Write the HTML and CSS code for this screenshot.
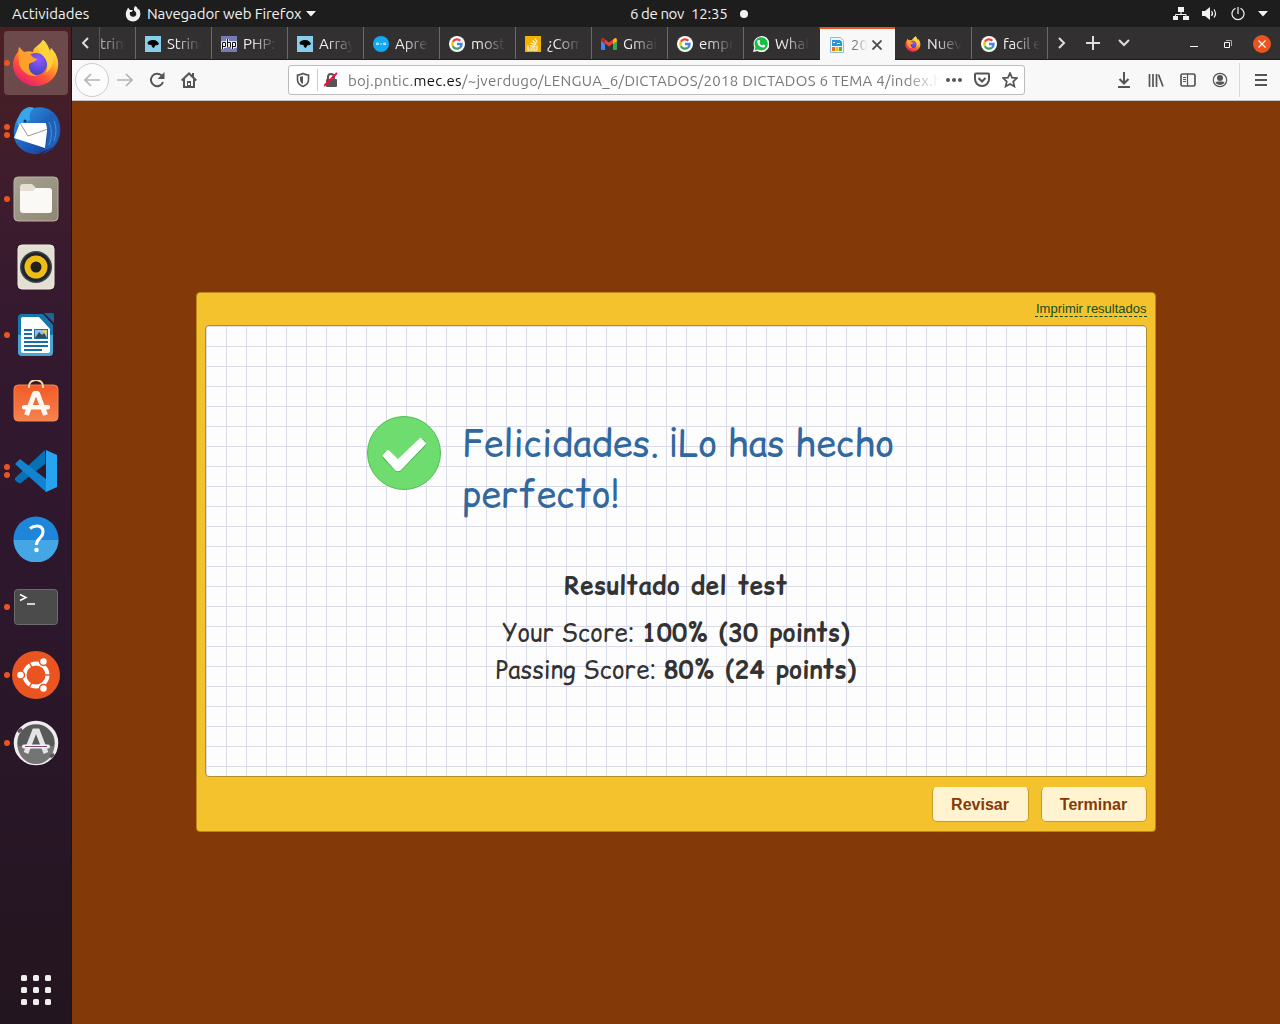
FILE: index.html
```html
<!DOCTYPE html>
<html lang="es">
<head>
<meta charset="utf-8">
<title>2018 DICTADOS 6 TEMA 4</title>
<link rel="stylesheet" href="styles.css">
</head>
<body>
<svg class="defs" width="0" height="0">
  <defs>
    <linearGradient id="fxFlame" x1=".8" y1="0" x2=".2" y2="1"><stop offset="0" stop-color="#fff44f"/><stop offset=".35" stop-color="#ffb22c"/><stop offset=".65" stop-color="#ff5634"/><stop offset="1" stop-color="#e3127d"/></linearGradient>
    <radialGradient id="fxGlobe" cx=".6" cy=".3" r=".8"><stop offset="0" stop-color="#9059ff"/><stop offset="1" stop-color="#3b3fb5"/></radialGradient>
    <linearGradient id="tb" x1="0" y1="0" x2="1" y2="1"><stop offset="0" stop-color="#2f9be8"/><stop offset=".6" stop-color="#1c58b5"/><stop offset="1" stop-color="#1e2f80"/></linearGradient>
    <linearGradient id="filesBg" x1="0" y1="0" x2="1" y2="1"><stop offset="0" stop-color="#a8a392"/><stop offset="1" stop-color="#8d8773"/></linearGradient>
    <linearGradient id="bag" x1="0" y1="0" x2="0" y2="1"><stop offset="0" stop-color="#f25a26"/><stop offset="1" stop-color="#f5834f"/></linearGradient>
  </defs>
  <symbol id="firefox" viewBox="0 0 48 48">
    <path fill="url(#fxFlame)" d="M31 1c4 3 6 8 7 12l1-4c5 5 8 11 7 19-1 11-11 19-22 19S2 39 1 27c0-6 2-11 5-14l1-5 5 5c3-1 6-1 9 0 0-5 6-6 10-12z"/>
    <circle cx="24" cy="25" r="11" fill="url(#fxGlobe)"/>
    <path fill="#ffa02c" d="M7 8c2 4 6 6 10 6 2 1 3 5 8 6-1 3-5 3-8 5-1 7 3 10 8 12-9 1-18-6-18-14-1-6 0-10 0-15z"/>
    <path fill="#ffd43c" opacity=".85" d="M31 1c4 3 6 8 7 12l1-4c4 7 4 18-5 25 3-8 1-14-5-19-4-4-3-8 2-14z"/>
  </symbol>
  <symbol id="google" viewBox="0 0 16 16">
    <circle cx="8" cy="8" r="8" fill="#fff"/>
    <g fill="none" stroke-width="2.3">
      <path stroke="#ea4335" d="M3.9 5.8A4.6 4.6 0 0 1 11.3 4.8"/>
      <path stroke="#fbbc05" d="M3.9 5.8a4.6 4.6 0 0 0 0 4.4"/>
      <path stroke="#34a853" d="M3.9 10.2a4.6 4.6 0 0 0 7 1.4"/>
      <path stroke="#4285f4" d="M8 8h4.6a4.6 4.6 0 0 1-1.7 3.6"/>
    </g>
  </symbol>
  <symbol id="bird" viewBox="0 0 16 16">
    <path fill="#87ceeb" d="M0 0h16v16H0z"/>
    <path d="M2.500 6.500q1-2 3.500-2.300 4-.7 6 1l2 2.300-1 1.500-3 .5-1 2.500-2-1-.5-2-3.500-.5z"/>
  </symbol>
</svg>

<header class="topbar">
  <span class="activities">Actividades</span>
  <span class="appmenu">
    <svg width="16" height="16" viewBox="0 0 16 16"><path fill="#f2f2f2" d="M10 0c2 1 2.500 2 3 3.500L14 3c3 5 1 12-6 12.500C1 15.500-1 8 2.500 3L3 1.500 5 4h3L6.500 6H5c-1 3 1 5 3.500 4.800C12 10.500 12 6.500 9.500 5 8.500 3.500 9 1.500 10 0z"/></svg>
    <span class="appname">Navegador web Firefox</span>
    <svg width="10" height="6"><path fill="#f2f2f2" d="M0 0h10L5 5.500z"/></svg>
  </span>
  <span class="clock"><span class="date">6 de nov</span><span class="time">12:35</span><i class="dot"></i></span>
  <span class="tray">
    <svg width="16" height="14" viewBox="0 0 16 14"><path fill="#f2f2f2" d="M5 0h6v5H5zM0 9h5v4H0zM10 9h6v4h-6z"/><path fill="none" stroke="#f2f2f2" d="M8 4v3.500M2.500 9V7.500h10.500V9"/></svg>
    <svg width="16" height="14" viewBox="0 0 16 14"><path fill="#f2f2f2" d="M0 4h3l5-4v13L3 9H0z"/><path fill="none" stroke="#f2f2f2" stroke-width="1.200" d="M9.500 4q2 2.500 0 5M12 2.500q3 4 0 8"/></svg>
    <svg width="14" height="14" viewBox="0 0 14 14"><path fill="none" stroke="#f2f2f2" stroke-width="1.200" d="M4.500 1.200a6 6 0 1 0 5 0M7 0v7"/></svg>
    <svg width="10" height="6"><path fill="#f2f2f2" d="M0 0h10L5 5.500z"/></svg>
  </span>
</header>

<div class="desktop">
  <nav class="dock">
    <a class="app active one"><svg width="48" height="48"><use href="#firefox"/></svg></a>
    <a class="app two"><svg width="50" height="50" viewBox="0 0 50 50">
      <path fill="url(#tb)" d="M8 10c3-8 10-10 15-8 13-3 24 5 26 17 2 13-4 26-18 29l5-4-9 4c-9 1-18-4-22-11C1 28 3 17 8 10z"/>
      <path fill="#3aa6ea" d="M9 9c3-7 10-9 14-7-4 3-5 6-4 12l-11 6c-3-2-2-7 1-11z"/>
      <circle cx="14" cy="15" r="1.500" fill="#1b2c55"/>
      <path fill="#fff" d="M9 17l28 0-3 25L3 32z"/><path fill="none" stroke="#999" d="M9 17l8 13 20-7"/>
      <path fill="#2260b8" d="M34 15l8-9c9 10 9 26 0 35l-9 3c4-8 5-19 1-29z"/>
      <path fill="none" stroke="#3c98df" d="M38 16q5 11 0 23M43 15q4 9 0 20"/>
    </svg></a>
    <a class="app one"><svg width="46" height="46" viewBox="0 0 46 46"><rect x="1" y="1" width="44" height="44" rx="4" fill="url(#filesBg)" stroke="#b8b3a3"/><path fill="#e4e0d3" d="M7 11q0-3 3-3h9l4 4v7H7z"/><path fill="#faf9f6" d="M7 15h13l3-3h13q3 0 3 3v19q0 3-3 3H10q-3 0-3-3z"/></svg></a>
    <a class="app"><svg width="46" height="46" viewBox="0 0 46 46"><rect x="5" y="1" width="36" height="44" rx="4" fill="#e3dfd3" stroke="#f0ede4"/><circle cx="23" cy="23" r="16" fill="#41454b"/><circle cx="23" cy="23" r="14.500" fill="#20242b"/><circle cx="23" cy="23" r="11.500" fill="#eebd16"/><circle cx="23" cy="23" r="5.500" fill="#202020"/></svg></a>
    <a class="app one"><svg width="46" height="46" viewBox="0 0 46 46"><path d="M9 2h21l10 11v27q0 4-4 4H9q-4 0-4-4V6q0-4 4-4z" fill="#1677ad"/><path d="M5 23h35v17q0 4-4 4H9q-4 0-4-4z" fill="#4ba4d1"/><path d="M10 5h16l11 12v22q0 2-2 2H10q-2 0-2-2V7q0-2 2-2z" fill="#fff"/><path fill="#1c6695" d="M31 1h8q2 0 2 2v8z"/><path stroke="#176fa4" stroke-width="2" d="M11 18h8M11 22h8M11 26h8M11 30h24M11 34h24M11 38h18"/><rect x="21.500" y="17.500" width="13" height="9" fill="#8fc3df" stroke="#176fa4"/><circle cx="32" cy="20" r="2" fill="#f6cd34"/><path fill="#374953" d="M22 26l4-6 3 3 2-2 3 5z"/></svg></a>
    <a class="app"><svg width="46" height="46" viewBox="0 0 46 46"><rect x="1" y="5" width="44" height="36" rx="4" fill="url(#bag)" stroke="#f68355"/><path fill="none" stroke="#f2d9a8" stroke-width="2" d="M16 8V6a7 6 0 0 1 14 0v2"/><path fill="none" stroke="#fff8f3" stroke-width="5" stroke-linejoin="round" d="M13.500 35L21.500 13.500h3L32.500 35"/><rect x="9" y="25" width="28" height="4.500" rx="2" fill="#fff8f3"/></svg></a>
    <a class="app two"><svg width="44" height="44" viewBox="0 0 44 44"><path fill="#0870b4" d="M1 29l30-28v14L7 34q-2 1-6-3z"/><path fill="#1382cf" d="M1 15l5-5 26 20v13L1 15z"/><path fill="#28a4ef" d="M32 1l11 5v32l-11 5z"/></svg></a>
    <a class="app"><svg width="46" height="46" viewBox="0 0 46 46"><circle cx="23" cy="23" r="22.500" fill="#1e85d9"/><path fill="#45a6e5" d="M.5 24h45a22.500 22.500 0 0 1-45 0z"/><path fill="none" stroke="#fff" stroke-width="3" d="M17 12.500q3-2.500 7-2.500 6 0 6 6 0 3-3 6-3.500 3-3.500 7"/><circle cx="23.500" cy="34" r="2.300" fill="#fff"/></svg></a>
    <a class="app one"><svg width="46" height="46" viewBox="0 0 46 46"><rect x="1.500" y="5.500" width="43" height="35" rx="3" fill="#4b4b4b" stroke="#6c6c6c"/><path fill="none" stroke="#fff" stroke-width="1.500" d="M7 10.500l6 3-6 3M14 20h8"/></svg></a>
    <a class="app one"><svg width="48" height="48" viewBox="0 0 48 48"><circle cx="24" cy="24" r="24" fill="#e95420"/><circle cx="24" cy="24" r="11.500" fill="none" stroke="#fff" stroke-width="4"/><path stroke="#e95420" stroke-width="1.500" d="M24 24h15M24 24l-7-13M24 24l-7 13"/><circle cx="24" cy="24" r="9" fill="#e95420"/><g fill="#fff" stroke="#e95420" stroke-width="1.500"><circle cx="8.500" cy="24" r="4"/><circle cx="31.500" cy="10.500" r="4"/><circle cx="31.500" cy="37.500" r="4"/></g></svg></a>
    <a class="app one"><svg width="46" height="46" viewBox="0 0 46 46"><circle cx="23" cy="23" r="20.500" fill="#595959" stroke="#ededed" stroke-width="3.500"/><path fill="#747474" d="M5 26h36a18 18 0 0 1-36 0z"/><path fill="none" stroke="#e4e4e4" stroke-width="5" d="M13 33L21.500 11h3L33 33"/><rect x="9" y="24.500" width="28" height="4" rx="2" fill="#f4f4f4"/><path stroke="#854a78" d="M12 26.500h22"/><path stroke="#595959" stroke-width="3" d="M5 12l4-3M37 37l4-3"/></svg></a>
    <a class="grid"><i></i><i></i><i></i><i></i><i></i><i></i><i></i><i></i><i></i></a>
  </nav>

  <main class="window">
    <div class="tabs">
      <span class="scroll"><svg width="12" height="14"><path d="M8 2L3 7l5 5"/></svg></span>
      <span class="tab cut"><b>tring</b></span>
      <span class="tab"><svg class="ico"><use href="#bird"/></svg><b>String</b></span>
      <span class="tab"><svg class="ico" viewBox="0 0 16 16"><path fill="#777bb3" d="M0 0h16v16H0z"/><path fill="none" stroke="#fff" stroke-width="2.600" d="M1.500 13V6.500h3v4h-3M6.500 3v8M6.500 6.500h3V11M11.500 13V6.500h3v4h-3"/><path fill="none" stroke="#111" stroke-width="1" d="M1.500 13V6.500h3v4h-3M6.500 3v8M6.500 6.500h3V11M11.500 13V6.500h3v4h-3"/></svg><b>PHP:</b></span>
      <span class="tab"><svg class="ico"><use href="#bird"/></svg><b>Array</b></span>
      <span class="tab"><svg class="ico" viewBox="0 0 16 16"><circle cx="8" cy="8" r="8" fill="#11a9f4"/><path fill="none" stroke="#bcecff" d="M3.500 9V7h2v1.500h-2M7 8h2M12.500 9V7h-2v1.500h2"/></svg><b>Apre</b></span>
      <span class="tab"><svg class="ico"><use href="#google"/></svg><b>most</b></span>
      <span class="tab"><svg class="ico" viewBox="0 0 16 16"><path fill="#f2b200" d="M0 0h16v16H0z"/><path fill="none" stroke="#fff" stroke-width="1.100" d="M3 9.500V14h9V9.500M5 12h5.500M5 9.700l5.500.7M5.700 7l5 1.700M7.500 4.500l4 3.400M10 2.500l2.500 4"/></svg><b>¿Com</b></span>
      <span class="tab"><svg class="ico" viewBox="0 0 16 16"><path fill="#4285f4" d="M0 4l4 3v7H1q-1 0-1-1z"/><path fill="#34a853" d="M12 7l4-3v9q0 1-1 1h-3z"/><path fill="#ea4335" d="M2 2l6 4.500L14 2l2 2-8 6.500L0 4z"/><path fill="#fbbc04" d="M12 4l2-2q2 0 2 2v1l-4 3z"/><path fill="#c5221f" d="M4 4L2 2Q0 2 0 4v1l4 3z"/></svg><b>Gmai</b></span>
      <span class="tab"><svg class="ico"><use href="#google"/></svg><b>empr</b></span>
      <span class="tab"><svg class="ico" viewBox="0 0 16 16"><path fill="#fff" d="M0 16l1.300-4.500A8 8 0 1 1 4.500 15z"/><path fill="#16be45" d="M1.500 14.500l1-3.300A6.600 6.600 0 1 1 5 13.600z"/><path fill="#fff" d="M5 4l1.500 0 .8 2-.8 1q1 2 2.800 2.600l1-1 2 1q0 2-2.300 2Q5.500 11 4.300 6.500 4 5 5 4z"/></svg><b>What</b></span>
      <span class="tab current"><svg class="ico" viewBox="0 0 16 16"><path fill="#eef6fb" stroke="#93bdd5" d="M1.500.5h10l3 3v12h-13z"/><path fill="#2596d8" d="M3 3h8l2 2v4H3z"/><path fill="#fff" d="M4 5h2v1H4zM8 6h3v1H8z"/><path fill="#e57122" d="M3 10h3v4H3z"/><path fill="#f1ba17" d="M6.500 10h3v4h-3z"/><path fill="#65ad25" d="M10 10h3v4h-3z"/></svg><b>20</b><svg class="x" width="10" height="10"><path d="M.5.500l9 9M9.500.500l-9 9"/></svg></span>
      <span class="tab first"><svg class="ico"><use href="#firefox"/></svg><b>Nuev</b></span>
      <span class="tab"><svg class="ico"><use href="#google"/></svg><b class="end">facil e</b></span>
      <span class="tabtools">
        <svg width="12" height="14"><path d="M3 2l5 5-5 5"/></svg>
        <svg width="14" height="14"><path d="M7 0v14M0 7h14"/></svg>
        <svg width="12" height="8"><path d="M1 1l5 5 5-5"/></svg>
      </span>
      <span class="wm">
        <svg width="8" height="8"><path stroke="#fff" d="M0 6.500h8"/></svg>
        <svg width="8" height="8"><path stroke="#fff" fill="none" d="M.5 2.500h5v5h-5z"/><path stroke="#aaa" fill="none" d="M2 .500h5.500V6"/></svg>
        <svg width="18" height="18"><circle cx="9" cy="9" r="9" fill="#e95420"/><path stroke="#fff" stroke-width="1.200" d="M5.500 5.500l7 7M12.500 5.500l-7 7"/></svg>
      </span>
    </div>

    <div class="toolbar">
      <span class="back"><svg width="16" height="14"><path d="M16 7H1M7 1L1 7l6 6"/></svg></span>
      <svg class="fwd" width="16" height="14"><path d="M0 7h15M9 1l6 6-6 6"/></svg>
      <svg class="reload" width="16" height="16"><path d="M12.500 3.500A6.200 6.200 0 1 0 14 10"/><path class="fill" d="M15.500 0v7H8.500z"/></svg>
      <svg class="home" width="16" height="16"><path d="M.7 8.500L8 1.500l7.300 7M3 7v8h10V7M12 1v4"/><path class="fill" d="M6 9h4v6H6z"/><path class="spot" d="M8 11v2"/></svg>
      <div class="urlbar">
        <svg class="shield" width="14" height="16"><path d="M7 1.500C5 2.500 3 3 1.500 3v5c0 3 2 5 5.500 6.500C10.500 13 12.500 11 12.500 8V3C11 3 9 2.500 7 1.500z"/><path class="fill" d="M7 4v8C5 11 4 9.500 4 8V5z"/></svg>
        <i class="bar"></i>
        <svg class="lock" width="14" height="16"><path d="M4 8V5q0-3 3-3t3 3v3"/><rect class="fill" x="2" y="7" width="11" height="8" rx="1"/><path class="slash" d="M0 14L13 1"/></svg>
        <span class="url">boj.pntic.<em>mec.es</em>/~jverdugo/LENGUA_6/DICTADOS/2018 DICTADOS 6 TEMA 4/index.h</span>
        <svg class="more" width="16" height="4"><circle cx="2" cy="2" r="2"/><circle cx="8" cy="2" r="2"/><circle cx="14" cy="2" r="2"/></svg>
        <svg width="16" height="16"><path d="M1 2.500q0-1 1-1h12q1 0 1 1V7A7 7 0 0 1 1 7zM4.500 6L8 9.500 11.500 6"/></svg>
        <svg width="16" height="16"><path class="star" d="M8 1l2 4.700 5 .4-3.800 3.400 1.200 5L8 12l-4.400 2.500 1.200-5L1 6.100l5-.4z"/></svg>
      </div>
      <div class="tools">
        <svg width="14" height="16"><path d="M7 0v11M2.500 7L7 11.500 11.500 7M1 15h12"/></svg>
        <svg width="16" height="16"><path class="mid" d="M1.500 2v13M5 2v13M8.500 2v13M10.500 2.500l4.500 12"/></svg>
        <svg width="16" height="14"><rect class="mid" x="1" y="1" width="14" height="12" rx="1.500"/><path class="thin" d="M7.500 1v12M3 4.500h3M3 6.500h3M3 8.500h3"/></svg>
        <svg width="16" height="16"><circle class="thin" cx="8" cy="8" r="6.700"/><circle class="fill" cx="8" cy="6" r="3"/><path class="fill" d="M3.500 11q0-1.500 2-1.500h5q2 0 2 1.500-4.500 4-9 0z"/></svg>
      </div>
      <i class="divider"></i>
      <svg class="menu" width="12" height="14"><path d="M0 2h12M0 7h12M0 12h12"/></svg>
    </div>

    <section class="page">
      <div class="quiz">
        <div class="quiz-top"><a class="print">Imprimir resultados</a></div>
        <div class="sheet">
          <div class="message">
            <svg width="74" height="74"><circle cx="37" cy="37" r="36.500" fill="#6fdc6f" stroke="#4fbd53"/><path fill="none" stroke="#3fae44" stroke-width="9" stroke-linejoin="round" stroke-linecap="round" d="M20 40L31 51.500 54.500 27.500"/><path fill="#fff" stroke="#fff" stroke-width="3" stroke-linejoin="round" d="M17 39.500l4-4 10 9.500 22.500-21.500 4 4L33 53q-2 1.500-4 0z"/></svg>
            <h1><span>Felicidades. ¡Lo has hecho</span><br><span>perfecto!</span></h1>
          </div>
          <h2>Resultado del test</h2>
          <p class="score"><span>Your Score:</span> <strong>100% (30 points)</strong></p>
          <p class="score pass"><span>Passing Score:</span> <strong>80% (24 points)</strong></p>
        </div>
        <div class="actions"><button class="review">Revisar</button><button class="finish">Terminar</button></div>
      </div>
    </section>
  </main>
</div>
</body>
</html>
```
FILE: styles.css
```css
* { box-sizing: border-box; }
body { margin: 0; width: 1280px; height: 1024px; overflow: hidden; font: 15px/20px Ubuntu, "Noto Sans", sans-serif; background: #1d1d1d; }
svg { display: block; flex: none; }
.defs { position: absolute; }

/* GNOME top bar */
.topbar { display: flex; align-items: center; height: 27px; padding: 0 15px 0 12px; color: #f2f2f2; background: #1d1d1d; }
.topbar span { white-space: nowrap; }
.activities { width: 113px; }
.appmenu { display: flex; align-items: center; width: 504px; }
.appname { width: 154px; margin: 0 5px 0 6px; letter-spacing: -.1px; }
.clock { display: flex; align-items: center; width: 544px; }
.date { width: 61px; letter-spacing: -.4px; }
.time { width: 49px; letter-spacing: -.2px; }
.dot { width: 8px; height: 8px; border-radius: 50%; background: #f2f2f2; }
.tray { display: flex; align-items: center; gap: 13px; }
.topbar .appmenu, .topbar .activities, .topbar .clock, .topbar .tray { flex: none; }
.clock { padding-left: 1px; }
.topbar .tray { padding-left: 0; }

.desktop { display: flex; height: 997px; }

/* Dock */
.dock { display: flex; flex: none; flex-direction: column; gap: 4px; width: 72px; padding: 4px; background: linear-gradient(#4a2023 0, #3d1c2d 17%, #34192f 30%, #2d172d 55%, #23151f 100%); border-right: 1px solid #241019; }
.app { position: relative; display: flex; flex: none; align-items: center; justify-content: center; width: 64px; height: 64px; border-radius: 4px; }
.app.active { background: #6c4a4c; }
.one::before, .two::before { content: ""; position: absolute; left: 0; top: 29px; width: 6px; height: 6px; border-radius: 50%; background: #e95420; }
.two::before { top: 25px; box-shadow: 0 8px #e95420; }
.grid { display: grid; grid-template-columns: repeat(3, 6px); gap: 6px; margin: auto 0 15px 17px; }
.grid i { height: 6px; border-radius: 1.500px; background: #eeeeec; }

/* Browser tabs */
.window { display: flex; flex-direction: column; width: 1208px; }
.tabs { display: flex; height: 33px; color: #f2f2f2; background: #323031; border-bottom: 1px solid #1c1b1b; }
.scroll { display: flex; align-items: center; justify-content: center; width: 27px; }
.scroll path, .tabtools path { fill: none; stroke: #dedede; stroke-width: 2; }
.tab { display: flex; align-items: center; flex: none; width: 76px; padding: 2px 0 0 9px; border-left: 1px solid #6b696a; overflow: hidden; }
.tab.cut { width: 36px; padding: 2px 0 0; opacity: .65; }
.tab b { width: 35px; margin-left: 6px; font-weight: 400; white-space: nowrap; overflow: hidden; -webkit-mask-image: linear-gradient(90deg, #000 25%, transparent 98%); mask-image: linear-gradient(90deg, #000 25%, transparent 98%); }
.tab.cut b { width: 26px; margin: 0; }
.tab .end { width: 38px; letter-spacing: -.2px; }
.ico { width: 16px; height: 16px; }
.current { height: 33px; border-left: 1px solid #323031; border-top: 2px solid #e95420; padding-top: 0; color: #777; background: #f8f8f8; background-clip: padding-box; }
.current b { width: 17px; margin-left: 6px; }
.x { margin-left: 4px; }
.x path { stroke: #4b4b4b; stroke-width: 1.800; }
.first { border-left-color: transparent; }
.tabtools { display: flex; align-items: center; width: 136px; padding-left: 8px; gap: 18px; border-left: 1px solid #6b696a; }
.wm { display: flex; align-items: center; gap: 26px; padding: 2px 0 0 7px; }
.wm svg:last-child { margin-left: -5px; }

/* Navigation bar */
.toolbar { display: flex; align-items: center; height: 41px; background: #f8f8f8; border-bottom: 1px solid #c5c5c8; }
.toolbar path, .toolbar rect, .toolbar circle { fill: none; stroke: #555; stroke-width: 2; }
.toolbar .fill, .toolbar .more circle { fill: #555; stroke: none; }
.toolbar .mid { stroke-width: 1.700; }
.toolbar .star { stroke-width: 1.700; }
.toolbar .thin { stroke-width: 1.200; }
.toolbar .shield path:first-child { stroke-width: 1.600; }
.back { display: flex; align-items: center; justify-content: center; width: 34px; height: 34px; margin-left: 3px; border: 1px solid #ccc; border-radius: 50%; background: #fcfcfc; }
.toolbar .back path, .toolbar .fwd path { stroke: #b4b4b4; stroke-width: 1.700; }
.fwd { margin-left: 8px; }
.reload { margin-left: 16px; }
.home { margin-left: 16px; }
.toolbar .spot { stroke: #f8f8f8; }
.urlbar { display: flex; align-items: center; width: 737px; height: 30px; margin-left: 91px; padding-left: 7px; background: #fff; border: 1px solid #bcbcbc; border-radius: 3px; }
.bar { width: 1px; height: 22px; margin: 0 6px 0 7px; background: #ccc; }
.toolbar .lock .slash { stroke: #ed1443; }
.url { width: 592px; margin: 1px 6px 0 10px; white-space: nowrap; overflow: hidden; color: #777; letter-spacing: .28px; -webkit-mask-image: linear-gradient(90deg, #000 94%, transparent); mask-image: linear-gradient(90deg, #000 94%, transparent); }
.url em { color: #111; font-style: normal; }
.more { margin-right: 12px; }
.more + svg { margin-right: 12px; }
.tools { display: flex; align-items: center; gap: 16px; margin-left: 92px; }
.tools svg:first-child { margin-right: 1px; }
.divider { width: 1px; height: 34px; margin: 0 15px 0 11px; background: #d8d8d8; }

/* Quiz result */
.page { flex: 1; padding-top: 191px; background: #843a08; }
.quiz { width: 960px; height: 540px; margin: 0 auto; padding: 0 8px; background: #f4c22d; border: 1px solid #b98a17; border-radius: 4px; }
.quiz-top { display: flex; justify-content: flex-end; height: 32px; padding-top: 8px; }
.print { width: 112px; height: 16px; padding-left: 1px; color: #174b20; font: 13px/15px "Liberation Sans", Arial, sans-serif; white-space: nowrap; border-bottom: 1px dashed #174b20; }
.sheet { height: 452px; padding-top: 90px; color: #333; font-family: "Comic Sans MS", "Comic Relief", "Comic Neue", Lato, sans-serif; text-align: center; border: 1px solid #b28d2d; border-radius: 4px; background-color: #fdfdfd; background-image: linear-gradient(90deg, #dcdce8 1px, transparent 1px), linear-gradient(#dcdce8 1px, transparent 1px); background-size: 20px 20px; }
.message { display: flex; height: 148px; padding-left: 161px; text-align: left; }
h1 { margin: 2px 0 0 21px; color: #31689f; font-size: 36px; line-height: 51px; font-weight: 400; white-space: nowrap; }
h2 { margin: 0; color: #333; font-size: 24px; line-height: 44px; letter-spacing: .55px; }
.score { margin: 6px 0 0; font-size: 24px; line-height: 37px; }
.score strong { letter-spacing: .55px; }
.pass { margin: 0; }
.actions { display: flex; justify-content: flex-end; gap: 12px; padding-top: 10px; }
.actions button { height: 35px; padding: 0 1px 0 0; color: #843a08; font: bold 16px "Liberation Sans", Arial, sans-serif; background: #fff3d0; border: 1px solid #c99d22; border-top-color: #fff3d0; border-radius: 5px; }
.review { width: 97px; }
.finish { width: 106px; }
```
